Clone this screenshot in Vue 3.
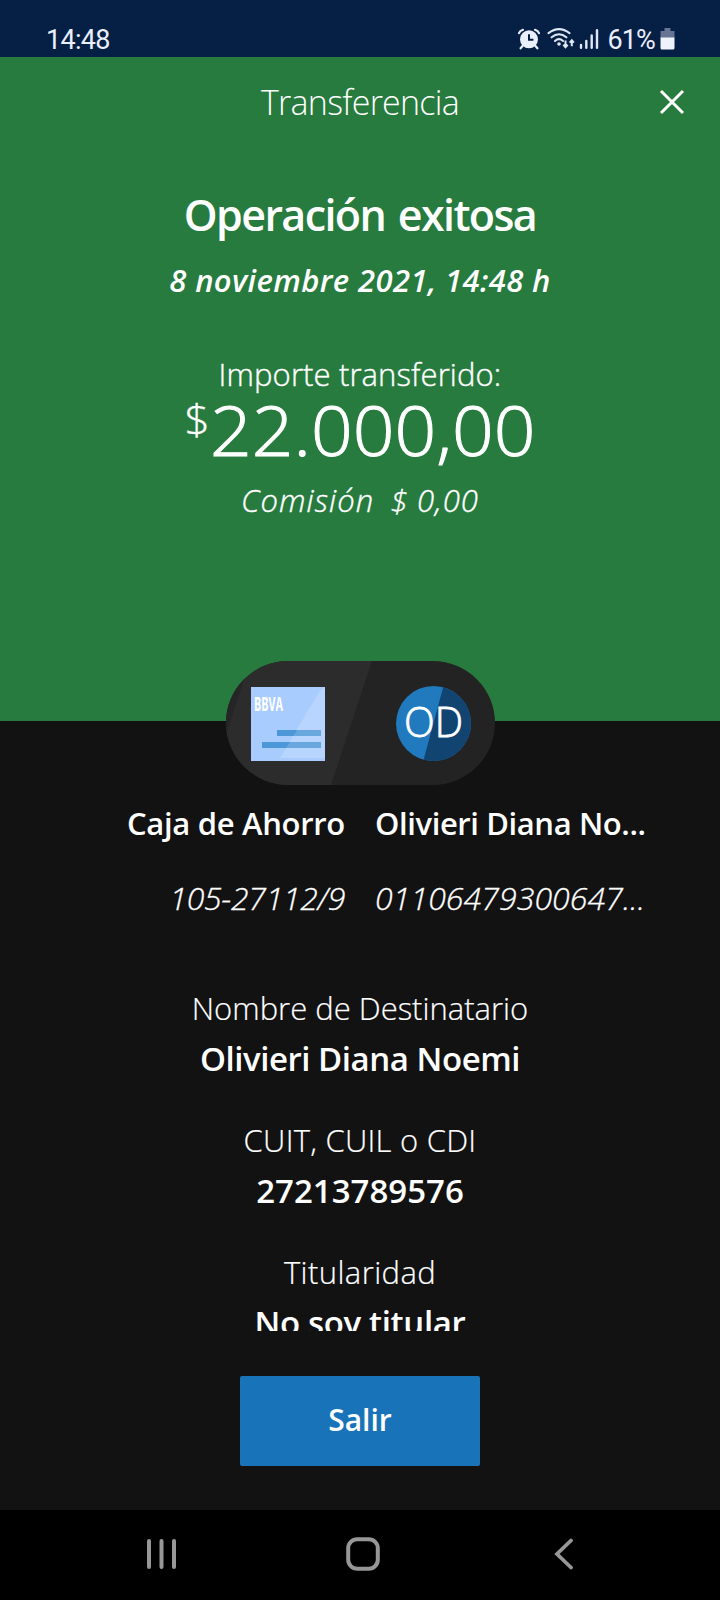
<script setup>
const details = [
  { key: 'name', label: 'Nombre de Destinatario', value: 'Olivieri Diana Noemi' },
  { key: 'cuit', label: 'CUIT, CUIL o CDI', value: '27213789576' },
  { key: 'owner', label: 'Titularidad', value: 'No soy titular' },
]
</script>

<template>
  <div class="screen">
    <div class="status">
      <span class="clock">14:48</span>
      <div class="status-right">
        <svg class="alarm" width="24" height="22" viewBox="0 0 24 22">
          <g fill="none" stroke="#e9effb" stroke-width="2.2" stroke-linecap="round">
            <path d="M2 5.2Q3 2.8 6 1.8M22 5.2Q21 2.8 18 1.8M5.5 18L3.6 20.3M18.5 18L20.4 20.3" />
          </g>
          <circle cx="12" cy="11.3" r="9" fill="#e9effb" />
          <path d="M12 6.3V11.8H16.4" fill="none" stroke="#061f44" stroke-width="2" />
        </svg>
        <svg class="wifi" width="28" height="22" viewBox="0 0 28 22">
          <g fill="none" stroke="#dfe7f5" stroke-width="2.1" stroke-linecap="round">
            <path d="M1.5 5.2Q12 -2.8 22.5 5.2" />
            <path d="M4.6 9.3Q12 3.2 19.4 9.3" />
            <path d="M8 13Q12 9.4 16 13" />
          </g>
          <circle cx="12" cy="16" r="1.8" fill="#dfe7f5" />
          <path d="M18.5 12.5V19M16.3 16.8L18.5 19.2L20.7 16.8M24.8 18.3V12.5M22.7 14.6L24.8 12.2L26.9 14.6" fill="none" stroke="#dfe7f5" stroke-width="2" />
        </svg>
        <svg class="signal" width="20" height="20" viewBox="0 0 20 20">
          <path d="M2 16V18.7M7.3 12V18.7M12.7 6.5V18.7M18 1.3V18.7" fill="none" stroke="#dfe7f5" stroke-width="2.4" stroke-linecap="round" />
        </svg>
        <span class="percent">61%</span>
        <svg class="battery" width="15" height="22" viewBox="0 0 15 22">
          <path d="M4.5 0H10.5V3H14.5V10H.5V3H4.5Z" fill="#667593" />
          <path d="M.5 9.5H14.5V20Q14.5 21.5 13 21.5H2Q.5 21.5 .5 20Z" fill="#eef2fb" />
        </svg>
      </div>
    </div>

    <header class="hero">
      <div class="bar">
        <span class="title">Transferencia</span>
        <svg class="close" width="26" height="26" viewBox="0 0 26 26">
          <path d="M2 2L24 24M24 2L2 24" stroke="#fff" stroke-width="3" fill="none" />
        </svg>
      </div>
      <h1 class="headline">Operación exitosa</h1>
      <p class="date">8 noviembre 2021, 14:48 h</p>
      <p class="amount-label">Importe transferido:</p>
      <p class="amount"><span class="currency">$</span><span class="figure">22.000,00</span></p>
      <p class="fee">Comisión&nbsp; $ 0,00</p>
      <div class="pill">
        <svg width="269" height="124" viewBox="0 0 269 124">
          <defs>
            <clipPath id="pill-shape"><rect width="269" height="124" rx="62" /></clipPath>
            <clipPath id="avatar-shape"><circle cx="207.5" cy="62.5" r="37.5" /></clipPath>
          </defs>
          <g clip-path="url(#pill-shape)">
            <rect width="269" height="124" fill="#232323" />
            <path d="M0 0H146L105 124H0Z" fill="#2c2c2c" />
            <path d="M0 0H24L0 74Z" fill="#252525" />
          </g>
          <rect x="25" y="26" width="74" height="74" fill="#a9ccff" />
          <path d="M99 26V97H54L93 31Z" fill="#b8d5ff" />
          <rect x="51" y="69" width="44" height="6" fill="#4b97d8" />
          <rect x="36" y="81" width="59" height="6" fill="#4b97d8" />
          <path d="M71 69H95V75H67.3ZM64 81H95V87H60Z" fill="#69a7df" />
          <text class="brand" x="28" y="50" textLength="29" lengthAdjust="spacingAndGlyphs">BBVA</text>
          <g clip-path="url(#avatar-shape)">
            <rect x="170" y="25" width="75" height="75" fill="#217abd" />
            <path d="M217.5 25H246V101H197Z" fill="#124472" />
          </g>
          <text class="initials" x="207.5" y="76" text-anchor="middle" textLength="59" lengthAdjust="spacingAndGlyphs">OD</text>
        </svg>
      </div>
    </header>

    <main class="body">
      <div class="accounts">
        <div class="from">
          <p class="acc-name">Caja de Ahorro</p>
          <p class="acc-num">105-27112/9</p>
        </div>
        <div class="to">
          <p class="acc-name">Olivieri Diana No...</p>
          <p class="acc-num">01106479300647...</p>
        </div>
      </div>
      <div v-for="d in details" :key="d.key" class="detail" :class="d.key">
        <p class="label">{{ d.label }}</p>
        <p class="value">{{ d.value }}</p>
      </div>
    </main>

    <footer class="footer">
      <button class="exit">Salir</button>
    </footer>

    <nav class="nav">
      <svg width="30" height="32" viewBox="0 0 30 32">
        <path d="M2 3V29M14.5 3V29M27 3V29" stroke="#979797" stroke-width="4" stroke-linecap="round" />
      </svg>
      <svg class="home" width="34" height="34" viewBox="0 0 34 34">
        <rect x="2.2" y="2.2" width="29.6" height="29.6" rx="9" fill="none" stroke="#979797" stroke-width="4" />
      </svg>
      <svg width="20" height="32" viewBox="0 0 20 32">
        <path d="M17 2.5L3 16L17 29.5" fill="none" stroke="#979797" stroke-width="3.8" stroke-linecap="round" />
      </svg>
    </nav>
  </div>
</template>

<style>
body { margin: 0; background: #000; }
</style>

<style scoped>
.screen { width: 720px; height: 1600px; display: flex; flex-direction: column; overflow: hidden; background: #121212; color: #fff; font-family: "Open Sans", "Noto Sans", sans-serif; }
p, h1 { margin: 0; white-space: nowrap; }
.status { height: 57px; flex: none; box-sizing: border-box; padding: 24px 45px 0 46px; display: flex; justify-content: space-between; background: #061f44; color: #e9effb; font-family: Roboto, sans-serif; font-size: 27px; line-height: 32px; }
.clock { letter-spacing: -0.7px; }
.status-right { display: flex; align-items: flex-start; }
.alarm { margin-top: 4px; }
.wifi { margin: 4px 0 0 6px; }
.signal { margin: 5px 0 0 4px; }
.percent { margin-left: 9px; letter-spacing: -0.9px; }
.battery { margin: 4px 0 0 5px; }
.hero { height: 664px; flex: none; position: relative; box-sizing: border-box; background: #277b3e; text-align: center; }
.bar { height: 90px; display: grid; grid-template-columns: 1fr auto 1fr; align-items: center; }
.title { grid-column: 2; font-size: 34px; font-weight: 300; line-height: 48px; letter-spacing: -0.75px; }
.close { justify-self: end; margin-right: 35px; }
.headline { margin-top: 38px; font-size: 43px; font-weight: 600; line-height: 60px; letter-spacing: -1.6px; word-spacing: 3px; }
.date { margin-top: 15px; font-size: 31px; font-weight: 600; font-style: italic; line-height: 40px; letter-spacing: 0.4px; }
.amount-label { margin-top: 54px; font-size: 31px; font-weight: 300; line-height: 40px; letter-spacing: 0.12px; -webkit-text-stroke: 0.4px #fff; }
.amount { display: flex; justify-content: center; font-weight: 300; transform: scaleX(1.06); -webkit-text-stroke: 1px #fff; }
.currency { font-size: 42px; line-height: 50px; -webkit-text-stroke: 0.4px #fff; }
.figure { font-size: 69px; line-height: 70px; }
.fee { margin-top: 16px; font-size: 31px; font-weight: 300; font-style: italic; line-height: 40px; letter-spacing: 1.1px; word-spacing: -1px; -webkit-text-stroke: 0.4px #fff; }
.pill { position: absolute; left: 226px; top: 604px; width: 269px; height: 124px; }
.pill svg { display: block; }
.brand { font: 700 20px "Open Sans", sans-serif; fill: #fff; }
.initials { font: 300 42px "Open Sans", sans-serif; fill: #fff; stroke: #fff; stroke-width: 0.8px; }
.body { height: 610px; flex: none; box-sizing: border-box; padding-top: 82px; overflow: hidden; text-align: center; }
.accounts { display: grid; grid-template-columns: 345px 1fr; column-gap: 30px; height: 185px; }
.from { display: flex; flex-direction: column; align-items: flex-end; letter-spacing: -0.3px; }
.to { display: flex; flex-direction: column; align-items: flex-start; }
.acc-name { font-size: 31px; font-weight: 600; line-height: 40px; }
.to .acc-name { letter-spacing: -0.4px; }
.acc-num { margin-top: 35px; font-size: 32px; font-weight: 300; font-style: italic; line-height: 40px; -webkit-text-stroke: 0.3px #fff; }
.to .acc-num { letter-spacing: 0.1px; }
.detail { height: 132px; }
.label { font-size: 31px; font-weight: 300; line-height: 40px; -webkit-text-stroke: 0.2px #fff; }
.value { margin-top: 11px; font-size: 33px; font-weight: 600; line-height: 40px; letter-spacing: -0.45px; }
.cuit .label { letter-spacing: 0.25px; }
.cuit .value { letter-spacing: 0; }
.owner .label { letter-spacing: 0.4px; }
.owner .value { letter-spacing: -0.35px; }
.footer { flex: none; height: 179px; box-sizing: border-box; padding-top: 45px; text-align: center; }
.exit { display: block; margin: 0 auto; width: 240px; height: 90px; padding: 0 0 4px; border: 0; border-radius: 2px; background: #1973b8; color: #fff; font: 600 30px "Open Sans", sans-serif; }
.nav { flex: none; height: 90px; box-sizing: border-box; padding: 0 146px 3px 147px; display: flex; align-items: center; justify-content: space-between; background: #000; }
.home { margin-right: 6px; }
</style>
